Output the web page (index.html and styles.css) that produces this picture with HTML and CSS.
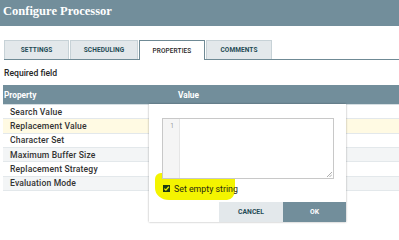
FILE: index.html
```html
<!DOCTYPE html>
<html>
<head>
<meta charset="utf-8">
<link rel="stylesheet" href="styles.css">
</head>
<body>
<div class="page">
  <div class="header"><span class="title">Configure Processor</span></div>
  <div class="tabbar">
    <div class="tab t1">SETTINGS</div>
    <div class="tab t2">SCHEDULING</div>
    <div class="tab active t3">PROPERTIES</div>
    <div class="tab t4">COMMENTS</div>
  </div>
  <div class="required">Required field</div>
  <div class="table">
    <div class="thead">
      <div class="th prop">Property</div>
      <div class="th val">Value</div>
    </div>
    <div class="row"><span>Search Value</span></div>
    <div class="row selected"><span>Replacement Value</span></div>
    <div class="row"><span>Character Set</span></div>
    <div class="row alt"><span>Maximum Buffer Size</span></div>
    <div class="row"><span>Replacement Strategy</span></div>
    <div class="row alt"><span>Evaluation Mode</span></div>

    <div class="dialog">
      <div class="highlight"></div>
      <div class="editor">
        <div class="gutter">1</div>
        <div class="code"></div>
        <svg class="grip" width="6" height="6" viewBox="0 0 6 6"><path d="M1 6 L6 1 M3.5 6 L6 3.5" stroke="#999" stroke-width="0.8" fill="none"/></svg>
      </div>
      <div class="check-row">
        <span class="checkbox"><svg width="7" height="7" viewBox="0 0 7 7"><path d="M1.3 3.6 L2.9 5.1 L5.8 1.8" stroke="#e6ef00" stroke-width="1.3" fill="none"/></svg></span>
        <span class="check-label">Set empty string</span>
      </div>
      <div class="actions">
        <div class="btn cancel">CANCEL</div>
        <div class="btn ok">OK</div>
      </div>
    </div>
  </div>
</div>
</body>
</html>
```
FILE: styles.css
```css
* { box-sizing: border-box; }
html, body { margin: 0; padding: 0; background: #fff; }
body { font-family: Roboto, "Liberation Sans", sans-serif; color: #262626; }
.page { width: 399px; height: 240px; overflow: hidden; position: relative; }

.header { height: 26px; background: #728e9b; padding-left: 3px; display: flex; align-items: center; padding-bottom: 3px; }
.title { font-family: "Liberation Serif", "DejaVu Serif", serif; font-weight: bold; font-size: 12.5px; color: #fff; }

.tabbar { margin: 14px 0 0 4px; height: 20px; display: flex; gap: 1px; border-bottom: 1px solid #6f8a95; align-items: flex-end; }
.tab { height: 19px; display: flex; align-items: center; justify-content: center; font-size: 6.5px; font-weight: 700; color: #1f4b55; background: #e3e8eb; border: 1px solid #c7d2d7; border-bottom: none; letter-spacing: 0.1px; }
.t1 { width: 65px; }
.t2 { width: 68px; }
.t3 { width: 66px; }
.t4 { width: 66px; }
.tab.active { background: #fff; color: #262626; border: 1px solid #6f8a95; border-bottom: none; height: 20px; margin-bottom: -1px; font-weight: 500; }

.required { margin: 8px 0 0 4px; font-size: 8.6px; line-height: 10px; font-weight: 500; color: #262626; }

.table { position: relative; margin: 7px 0 0 3px; }
.thead { height: 20px; background: #728e9b; border-bottom: 1px solid #d5dee2; display: flex; align-items: center; }
.th { color: #fff; font-size: 8.3px; font-weight: 700; }
.prop { width: 175px; padding-left: 1px; }
.val { padding-left: 0; }
.row { height: 14.33px; border-bottom: 1px solid #e3e8eb; display: flex; align-items: center; padding-left: 7px; font-size: 8.6px; font-weight: 500; color: #333; background: #fff; letter-spacing: 0.15px; }
.row.selected { background: #fffae3; }
.row.alt { background: #f3f5f6; }

.dialog { position: absolute; left: 146px; top: 19px; width: 197px; height: 118px; background: #fff; box-shadow: 0 0 2px rgba(0,0,0,0.35); display: flex; flex-direction: column; }
.highlight { position: absolute; left: 6px; top: 69px; width: 80px; height: 27px; background: #f4f400; border-radius: 6px 3px 8px 14px / 6px 3px 10px 12px; }
.editor { position: relative; margin: 14px 12px 0 13px; height: 61px; border: 1px solid #c8c8c8; display: flex; background: #fff; }
.gutter { width: 17px; background: #f5f5f5; border-right: 1px solid #e6e6e6; font-size: 6.5px; color: #999; text-align: right; padding: 3px 5px 0 0; }
.code { flex: 1; }
.grip { position: absolute; right: 1px; bottom: 1px; }
.check-row { position: relative; margin: 5px 0 0 14px; display: flex; align-items: center; gap: 4px; height: 9px; }
.checkbox { width: 7px; height: 7px; background: #1e3a14; display: flex; flex: none; }
.check-label { font-size: 8.8px; color: #2a2a10; white-space: nowrap; }
.actions { margin-top: auto; display: flex; justify-content: flex-end; }
.btn { height: 20px; display: flex; align-items: center; justify-content: center; font-size: 6.8px; font-weight: 700; }
.cancel { width: 64px; background: #e3e8eb; color: #1f4b55; }
.ok { width: 63px; background: #728e9b; color: #fff; }
```
